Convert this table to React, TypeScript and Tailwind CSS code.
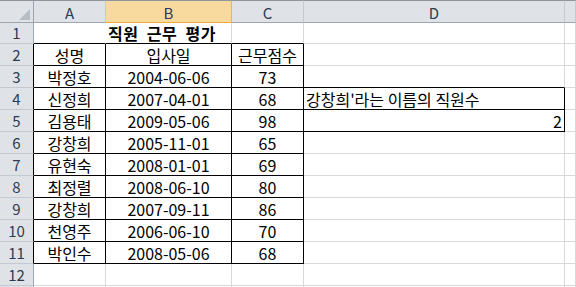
import React from "react";

const FONT = { fontFamily: '"Noto Sans CJK KR", "Noto Sans", sans-serif' };

type Row = [string, string, string, string, "l" | "r" | ""];

const rows: Row[] = [
  ["", "", "", "", ""],
  ["성명", "입사일", "근무점수", "", ""],
  ["박정호", "2004-06-06", "73", "", ""],
  ["신정희", "2007-04-01", "68", "강창희'라는 이름의 직원수", "l"],
  ["김용태", "2009-05-06", "98", "2", "r"],
  ["강창희", "2005-11-01", "65", "", ""],
  ["유현숙", "2008-01-01", "69", "", ""],
  ["최정렬", "2008-06-10", "80", "", ""],
  ["강창희", "2007-09-11", "86", "", ""],
  ["천영주", "2006-06-10", "70", "", ""],
  ["박인수", "2008-05-06", "68", "", ""],
  ["", "", "", "", ""],
  ["", "", "", "", ""],
];

const GRAY = "border-[#d9d9d9]";

function App() {
  const heads = ["A", "B", "C", "D", ""];
  const cells: React.ReactNode[] = [];

  cells.push(
    <div
      key="corner"
      className="relative h-[23px] border-t border-r border-b border-t-[#8e949c] border-r-[#9ea5ae] border-b-[#9ea5ae] bg-[#dfe3e8]"
    >
      <div className="absolute right-[3px] bottom-[2px] w-0 h-0 border-l-[11px] border-l-transparent border-b-[11px] border-b-[#b8bec6]" />
    </div>
  );
  heads.forEach((h, i) => {
    const sel = i === 1;
    cells.push(
      <div
        key={"h" + i}
        className={
          sel
            ? "h-[23px] border-t border-r border-b border-t-[#8e949c] border-r-[#e9b45c] border-b-[#f0a93a] bg-[#f9da9e] flex items-center justify-center text-[15px] text-[#2c3a52]"
            : "h-[23px] border-t border-r border-b border-t-[#8e949c] border-r-[#c4cad2] border-b-[#9ea5ae] bg-[#dfe3e8] flex items-center justify-center text-[15px] text-[#2c3a52]"
        }
      >
        <span className="leading-none pt-[1px]">{h}</span>
      </div>
    );
  });

  rows.forEach((r, ri) => {
    const rn = ri + 1;
    const inTable = rn >= 2 && rn <= 11;
    cells.push(
      <div
        key={"rh" + rn}
        className={
          (inTable ? "border-r-black " : "border-r-[#9ea5ae] ") +
          "border-r border-b border-b-[#c4cad2] bg-[#dfe3e8] flex items-end justify-center pb-[1px] text-[15px] text-[#2c3a52]"
        }
      >
        <span className="leading-[18px]">{rn <= 12 ? rn : ""}</span>
      </div>
    );
    for (let c = 0; c < 5; c++) {
      let cls = "border-r border-b bg-white flex items-end pb-[1px] text-[16px] text-black whitespace-nowrap ";
      let rc = GRAY;
      let bc = GRAY;
      if (c <= 2) {
        if (inTable) {
          rc = "border-r-black";
          bc = "border-b-black";
        } else if (rn === 1) {
          bc = "border-b-black";
          rc = c === 0 ? "border-r-white" : "border-r-[#d9d9d9]";
        }
        cls += "justify-center ";
      } else if (c === 3) {
        if (rn === 3) bc = "border-b-black";
        if (rn === 4 || rn === 5) {
          rc = "border-r-black";
          bc = "border-b-black";
        }
        cls += r[4] === "r" ? "justify-end pr-[2px] " : "justify-start pl-[2px] ";
      }
      let content: React.ReactNode = c <= 3 ? r[c] : "";
      if (rn === 1 && c === 1) {
        content = (
          <span className="font-bold tracking-[0.5px] absolute left-[2px] bottom-[1px] leading-[18px]">
            직원&nbsp;&nbsp;근무&nbsp;&nbsp;평가
          </span>
        );
        cls += "relative ";
      }
      cells.push(
        <div key={rn + "-" + c} className={cls + rc + " " + bc}>
          {typeof content === "string" ? <span className="leading-[18px]">{content}</span> : content}
        </div>
      );
    }
  });

  return (
    <div className="w-[576px] h-[287px] overflow-hidden bg-white" style={FONT}>
      <div className="grid grid-cols-[34px_72px_126px_72px_261px_11px] grid-rows-[23px_21px_repeat(12,22px)]">
        {cells}
      </div>
    </div>
  );
}

export default App;
